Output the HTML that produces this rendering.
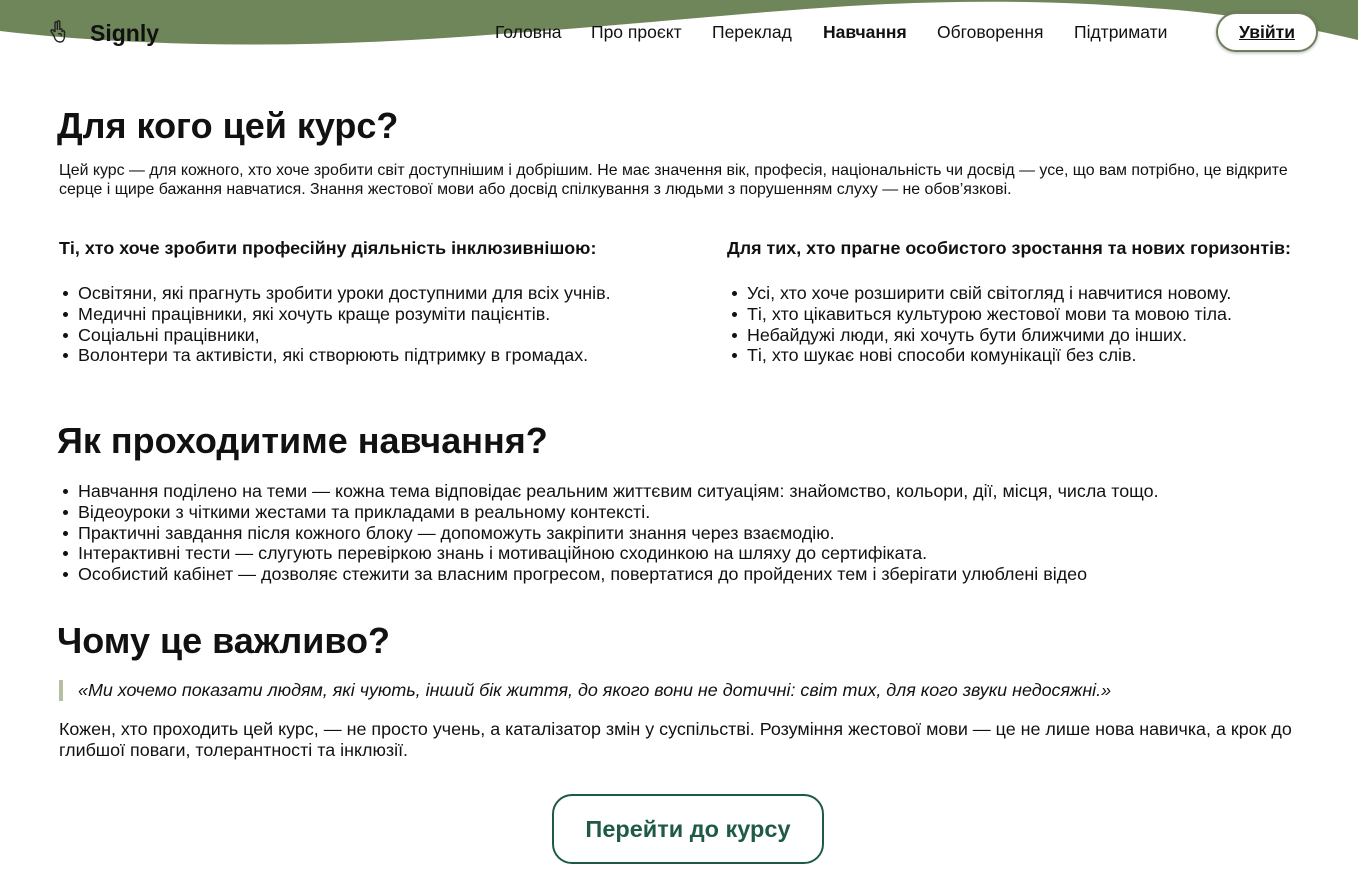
<!DOCTYPE html>
<html><head><meta charset="utf-8"><style>
*{margin:0;padding:0;box-sizing:border-box}
body{width:1358px;height:893px;position:relative;background:#fff;font-family:"Liberation Sans",Arial,sans-serif;color:#111;overflow:hidden}
.a{position:absolute}
h1{font-size:36px;font-weight:bold;line-height:44px;white-space:nowrap}
nav span{position:absolute;top:21px;font-size:17.5px;line-height:22px}
ul{list-style:none}
ul li{position:relative;padding-left:20px;font-size:17.9px;line-height:20.8px;white-space:nowrap}
ul li:before{content:"";position:absolute;left:5px;top:8px;width:5px;height:5px;border-radius:50%;background:#111}
.p{font-size:15.9px;line-height:19px}
.sub{font-size:17.9px;font-weight:bold;line-height:20px;white-space:nowrap}
</style></head><body>
<svg class="a" style="left:0;top:0" width="1358" height="60" viewBox="0 0 1358 60">
<path d="M0 0 H1358 V40 C1300 26 1220 12 1150 8 C1050 0 950 0 850 6 C750 12 620 26 500 34 C400 42 300 46 200 44 C120 42 60 38 0 31 Z" fill="#6f855a"/>
</svg>
<svg class="a" style="left:50px;top:20px" width="18" height="24" viewBox="0 0 18 24" fill="none" stroke="#222" stroke-width="1.4">
<path d="M5 12 V3 a1.2 1.2 0 0 1 2.4 0 V10 M7.4 9 V2 a1.2 1.2 0 0 1 2.4 0 V10 M9.8 10 a1.2 1.2 0 0 1 2.4 0 V12 M5 12 L3 10 a1.2 1.2 0 0 0 -1.6 1.8 L4 16 C5 20 7 22 10 22 C13 22 14.5 19.5 14.5 16 V12 C14.5 10.5 12 10.5 12 12 M8 14 C10 13 12 14 11 16"/>
</svg>
<div class="a" style="left:90px;top:19px;font-size:23px;font-weight:bold;line-height:28px">Signly</div>
<nav>
<span style="left:495px">Головна</span>
<span style="left:591px">Про проєкт</span>
<span style="left:712px">Переклад</span>
<span style="left:823px;font-weight:bold">Навчання</span>
<span style="left:937px">Обговорення</span>
<span style="left:1074px">Підтримати</span>
</nav>
<div class="a" style="left:1216px;top:12px;width:102px;height:40px;border:2px solid #6f7f5e;border-radius:20px;background:#fff;box-shadow:0 1px 3px rgba(0,0,0,.3);text-align:center;line-height:36px;font-size:17.5px;font-weight:bold;text-decoration:underline">Увійти</div>

<h1 class="a" style="left:57px;top:104px">Для кого цей курс?</h1>
<div class="a p" style="left:59px;top:161px;width:1250px">Цей курс — для кожного, хто хоче зробити світ доступнішим і добрішим. Не має значення вік, професія, національність чи досвід — усе, що вам потрібно, це відкрите серце і щире бажання навчатися. Знання жестової мови або досвід спілкування з людьми з порушенням слуху — не обов’язкові.</div>
<div class="a sub" style="left:59px;top:238px">Ті, хто хоче зробити професійну діяльність інклюзивнішою:</div>
<div class="a sub" style="left:727px;top:238px">Для тих, хто прагне особистого зростання та нових горизонтів:</div>
<ul class="a" style="left:58px;top:283px">
<li>Освітяни, які прагнуть зробити уроки доступними для всіх учнів.</li>
<li>Медичні працівники, які хочуть краще розуміти пацієнтів.</li>
<li>Соціальні працівники,</li>
<li>Волонтери та активісти, які створюють підтримку в громадах.</li>
</ul>
<ul class="a" style="left:727px;top:283px">
<li>Усі, хто хоче розширити свій світогляд і навчитися новому.</li>
<li>Ті, хто цікавиться культурою жестової мови та мовою тіла.</li>
<li>Небайдужі люди, які хочуть бути ближчими до інших.</li>
<li>Ті, хто шукає нові способи комунікації без слів.</li>
</ul>

<h1 class="a" style="left:57px;top:419px">Як проходитиме навчання?</h1>
<ul class="a" style="left:58px;top:481px">
<li>Навчання поділено на теми — кожна тема відповідає реальним життєвим ситуаціям: знайомство, кольори, дії, місця, числа тощо.</li>
<li>Відеоуроки з чіткими жестами та прикладами в реальному контексті.</li>
<li>Практичні завдання після кожного блоку — допоможуть закріпити знання через взаємодію.</li>
<li>Інтерактивні тести — слугують перевіркою знань і мотиваційною сходинкою на шляху до сертифіката.</li>
<li>Особистий кабінет — дозволяє стежити за власним прогресом, повертатися до пройдених тем і зберігати улюблені відео</li>
</ul>

<h1 class="a" style="left:57px;top:619px">Чому це важливо?</h1>
<div class="a" style="left:59px;top:680px;width:4px;height:21px;background:#b5c0a3"></div>
<div class="a" style="left:78px;top:680px;font-size:17.9px;font-style:italic;line-height:21px;white-space:nowrap">«Ми хочемо показати людям, які чують, інший бік життя, до якого вони не дотичні: світ тих, для кого звуки недосяжні.»</div>
<div class="a" style="left:59px;top:719px;width:1260px;font-size:17.9px;line-height:21px">Кожен, хто проходить цей курс, — не просто учень, а каталізатор змін у суспільстві. Розуміння жестової мови — це не лише нова навичка, а крок до глибшої поваги, толерантності та інклюзії.</div>

<div class="a" style="left:552px;top:794px;width:272px;height:70px;border:2px solid #1f5a48;border-radius:20px;text-align:center;line-height:66px;font-size:23.5px;font-weight:bold;color:#1f5a48">Перейти до курсу</div>
</body></html>
